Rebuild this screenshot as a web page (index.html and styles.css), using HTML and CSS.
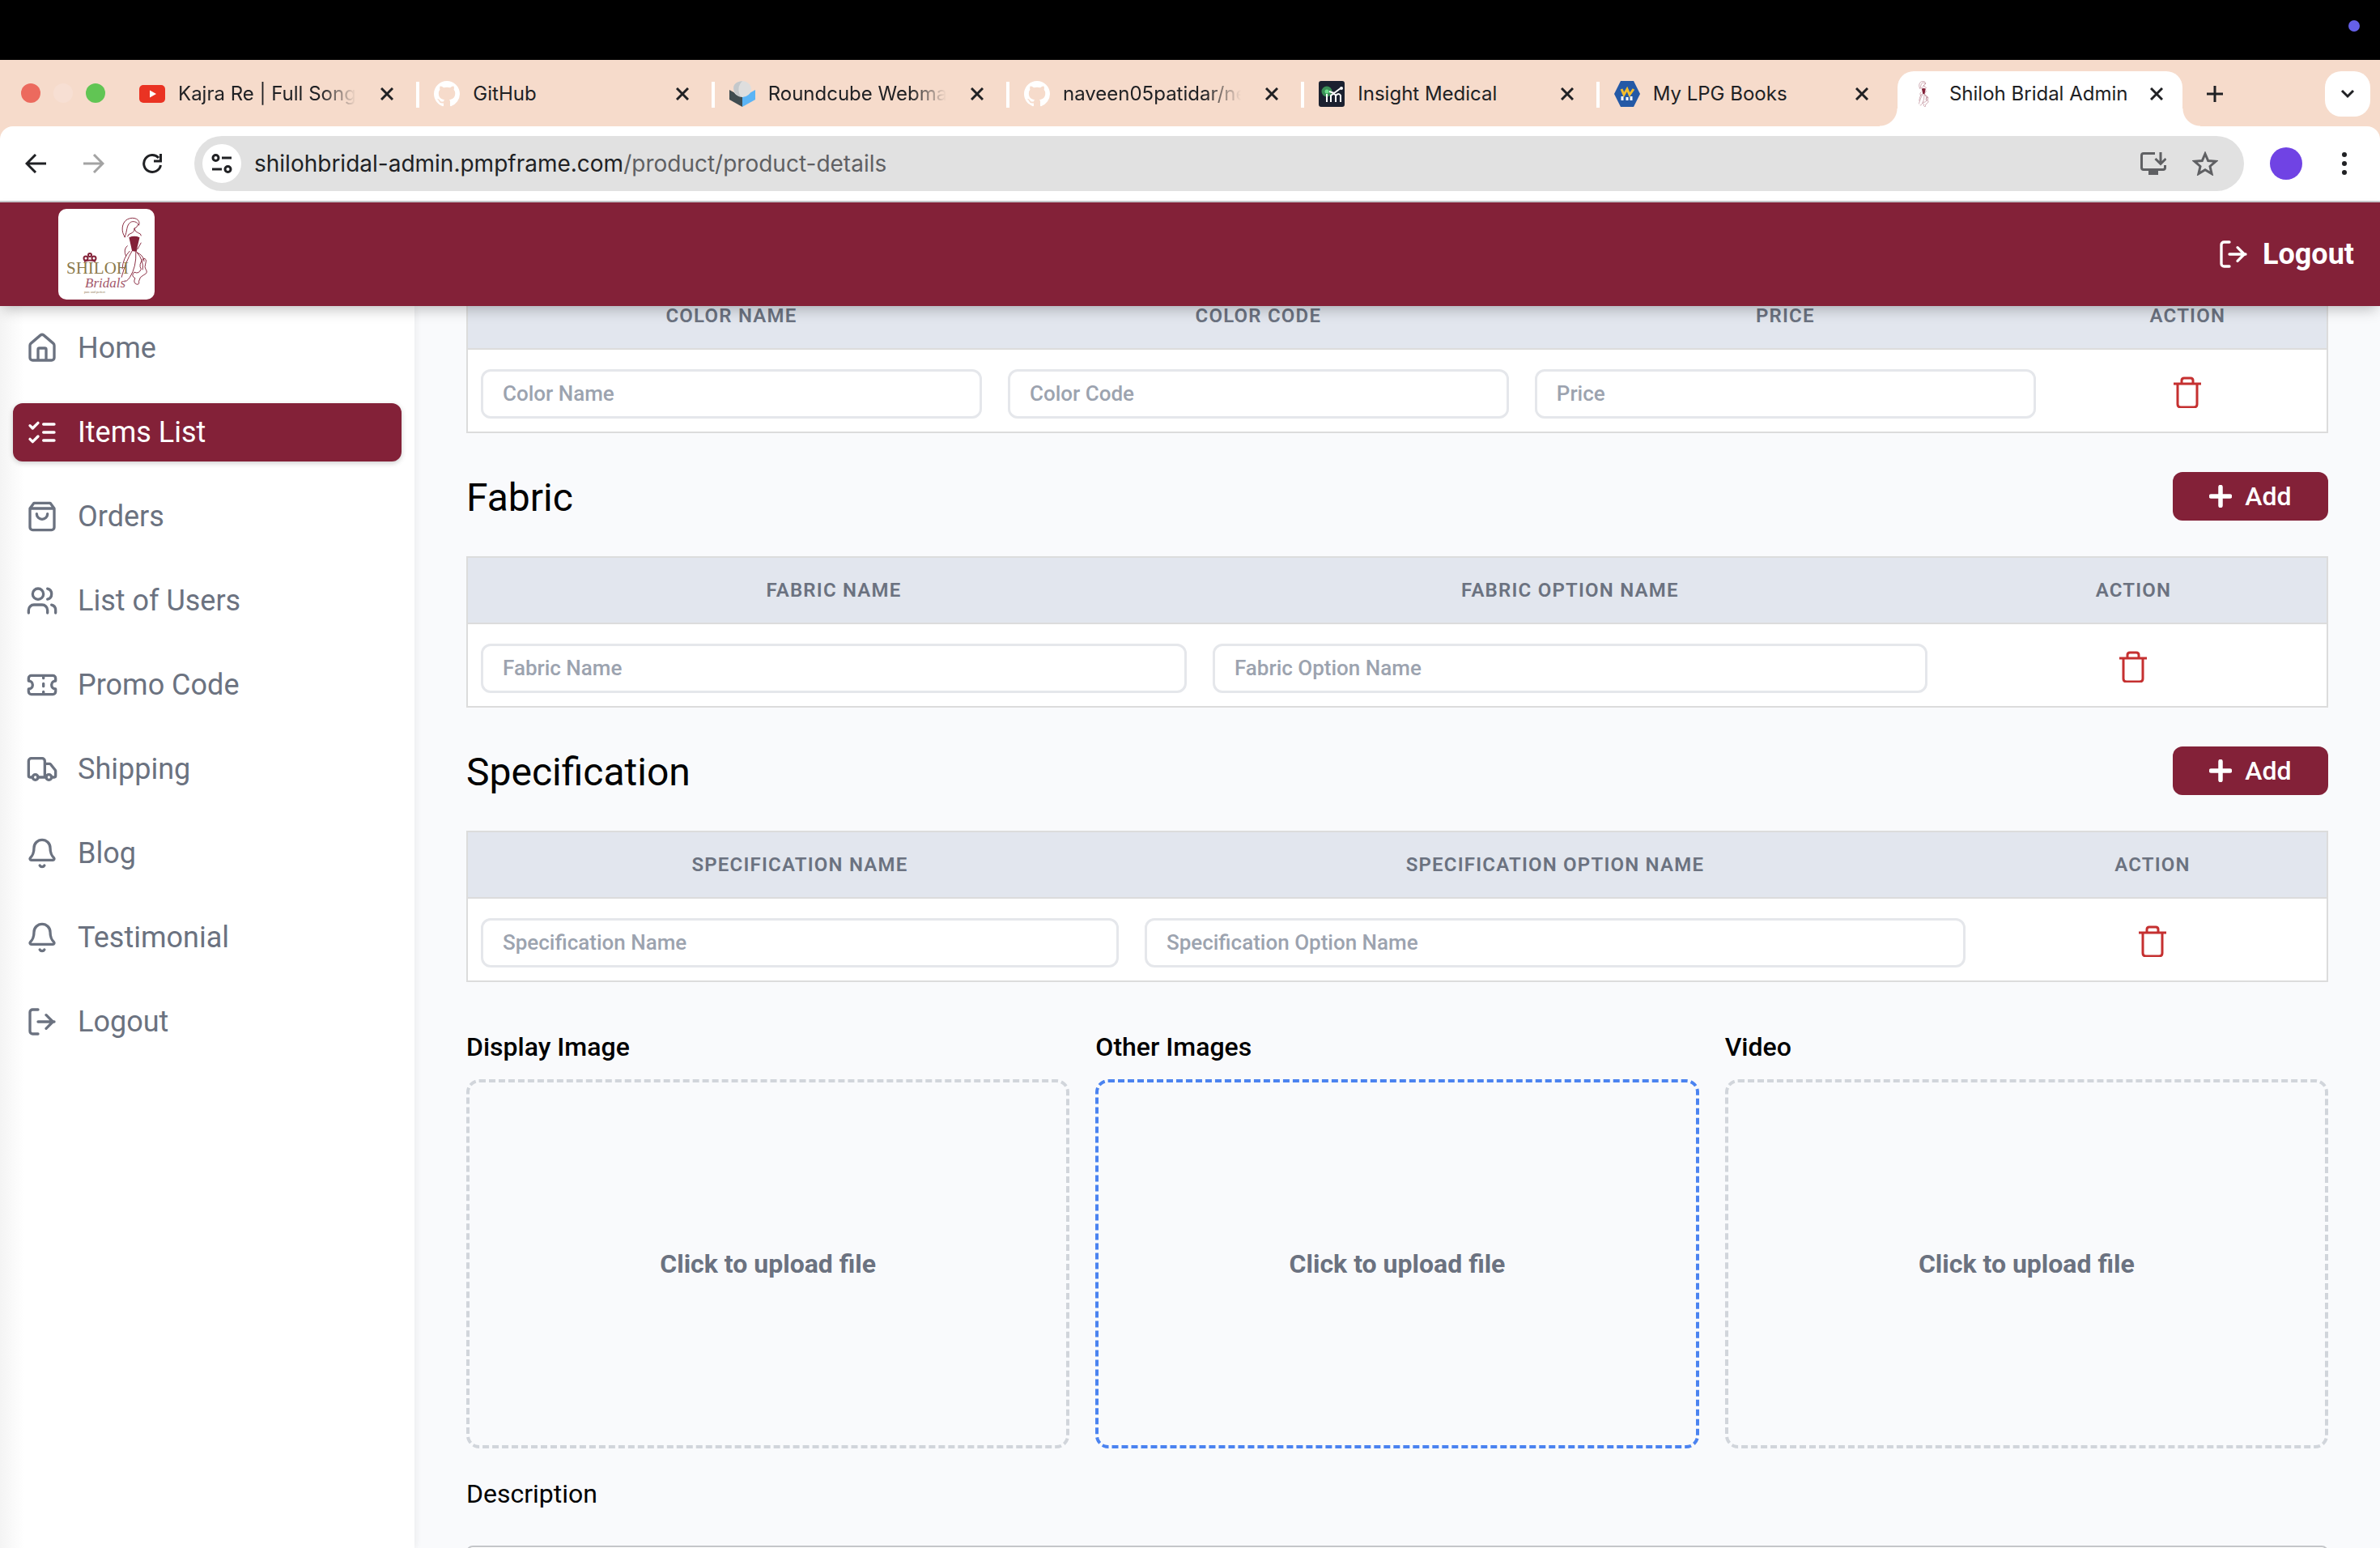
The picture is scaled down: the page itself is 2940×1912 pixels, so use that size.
FILE: index.html
```html
<!DOCTYPE html>
<html lang="en">
<head>
<meta charset="utf-8">
<title>Shiloh Bridal Admin</title>
<link rel="stylesheet" href="styles.css">
</head>
<body>
<svg class="defs" aria-hidden="true">
  <symbol id="close" viewBox="0 0 16 16"><path d="M1 1l14 14M15 1L1 15" stroke="currentColor" stroke-width="3"/></symbol>
  <symbol id="github" viewBox="0 0 16 16"><path fill="#fff" d="M8 0C3.58 0 0 3.58 0 8c0 3.54 2.29 6.53 5.47 7.59.4.07.55-.17.55-.38 0-.19-.01-.82-.01-1.49-2.01.37-2.53-.49-2.69-.94-.09-.23-.48-.94-.82-1.13-.28-.15-.68-.52-.01-.53.63-.01 1.08.58 1.23.82.72 1.21 1.87.87 2.33.66.07-.52.28-.87.51-1.07-1.78-.2-3.64-.89-3.64-3.95 0-.87.31-1.59.82-2.15-.08-.2-.36-1.02.08-2.12 0 0 .67-.21 2.2.82.64-.18 1.32-.27 2-.27s1.36.09 2 .27c1.53-1.04 2.2-.82 2.2-.82.44 1.1.16 1.92.08 2.12.51.56.82 1.27.82 2.15 0 3.07-1.87 3.75-3.65 3.95.29.25.54.73.54 1.48 0 1.07-.01 1.93-.01 2.2 0 .21.15.46.55.38A8.01 8.01 0 0 0 16 8c0-4.42-3.58-8-8-8z"/></symbol>
  <symbol id="logout" viewBox="0 0 24 24"><path d="M9 21H5a2 2 0 0 1-2-2V5a2 2 0 0 1 2-2h4M15 17l5-5-5-5M21 12H9"/></symbol>
  <symbol id="bell" viewBox="0 0 24 24"><path d="M10.300 21a1.940 1.940 0 0 0 3.400 0M3.262 15.326A1 1 0 0 0 4 17h16a1 1 0 0 0 .74-1.673C19.410 13.956 18 12.499 18 8A6 6 0 0 0 6 8c0 4.499-1.411 5.956-2.738 7.326"/></symbol>
  <symbol id="trash" viewBox="0 0 36 40"><path d="M1 10h34M11 9V6q0-3 3-3h8q3 0 3 3v3M6 10v25q0 4 4 4h16q4 0 4-4V10" fill="none" stroke="#c53030" stroke-width="3"/></symbol>
  <symbol id="plus" viewBox="0 0 28 28"><path d="M14 2.500v23M2.500 14h23" stroke="#fff" stroke-width="5.500" stroke-linecap="round"/></symbol>
  <symbol id="bride" viewBox="0 0 36 90"><g fill="none" stroke="#832138" stroke-width="1"><path d="M7 27C1 20 2 7 10 3c8-4 18 0 15 8-2-5-8-6-11-4-6 4-4 12-8 20M24 10q-2 5-5 5q1 4-3 6q-6 2-6 5M19 15q1 5 5 6t4 4M10 38Q4 43 8 52M28 34l-5 9M13 45Q4 54 3 69M16 45Q8 58 2 80M21 46q1 20-8 34-5 7-7 4M22 46q10 12 8 24M22 47q9 3 10 12M31 55q5 0 3 6t0 8q4 5-3 8-5 2-6 8 1 5-3 4-5-2-2-8-6-3-1-8 6 3 9-4-4-6 3-14"/></g><path d="M12 27q7-3 14 0l-3 13-1 6-6-1q-2-9-4-18z" fill="#832138"/></symbol>
</svg>

<div class="menubar"><span class="camera"></span></div>

<header class="browser">
  <div class="strip">
    <div class="lights"><i class="red"></i><i class="pale"></i><i class="green"></i></div>
    <div class="tabs">
      <div class="tab"><svg class="fav" viewBox="0 0 32 32"><rect y="5" width="32" height="22" rx="5" fill="#ea3323"/><path d="M13 11.500l8 4.500-8 4.500z" fill="#fff"/></svg><span class="title fade">Kajra Re | Full Song</span><button class="x" aria-label="Close tab"><svg><use href="#close"/></svg></button></div>
      <div class="tab"><svg class="fav"><use href="#github"/></svg><span class="title">GitHub</span><button class="x" aria-label="Close tab"><svg><use href="#close"/></svg></button></div>
      <div class="tab"><svg class="fav" viewBox="0 0 32 32"><path d="M0 11l16 9v12L0 23z" fill="#3f4c50"/><path d="M32 11l-16 9v12l16-9z" fill="#5bb4f5"/><ellipse cx="16" cy="10" rx="11" ry="10" fill="#dedede"/><path d="M16 0Q2 2 6 13q3 5 8 7Q8 8 16 0z" fill="#c4c8cb"/></svg><span class="title fade">Roundcube Webmail</span><button class="x" aria-label="Close tab"><svg><use href="#close"/></svg></button></div>
      <div class="tab"><svg class="fav"><use href="#github"/></svg><span class="title fade">naveen05patidar/new</span><button class="x" aria-label="Close tab"><svg><use href="#close"/></svg></button></div>
      <div class="tab"><svg class="fav" viewBox="0 0 32 32"><rect width="32" height="32" rx="3" fill="#1b2130"/><circle cx="10" cy="13" r="6.500" fill="#3a8f57"/><circle cx="10" cy="13" r="2.500" fill="#6be08c"/><path d="M10 16v10M15 26v-8q4-4 6 0v8M21 18q4-4 6 0v8M13 13l6 2 8-6" fill="none" stroke="#fff" stroke-width="2"/><circle cx="28" cy="9" r="2" fill="#fff"/></svg><span class="title">Insight Medical</span><button class="x" aria-label="Close tab"><svg><use href="#close"/></svg></button></div>
      <div class="tab last"><svg class="fav" viewBox="0 0 32 32"><path d="M8 0h16l8 16-8 16H8L0 16z" fill="#2459a6"/><path d="M9 10l3 7 4-7 3 7 5-7" fill="none" stroke="#f4bd2b" stroke-width="3"/><path d="M10 24v-5M16 24v-4M21 24v-5" stroke="#fff" stroke-width="3"/></svg><span class="title">My LPG Books</span><button class="x" aria-label="Close tab"><svg><use href="#close"/></svg></button></div>
      <div class="tab active"><svg class="fav"><use href="#bride"/></svg><span class="title">Shiloh Bridal Admin</span><button class="x" aria-label="Close tab"><svg><use href="#close"/></svg></button></div>
    </div>
    <div class="strip-end">
      <button class="plain" aria-label="New tab"><svg width="20" height="20" viewBox="0 0 20 20"><path d="M10 0v20M0 10h20" stroke="#202124" stroke-width="3"/></svg></button>
      <button class="chevron" aria-label="Search tabs"><svg width="18" height="12" viewBox="0 0 18 12"><path d="M2 2l7 7 7-7" fill="none" stroke="#202124" stroke-width="3"/></svg></button>
    </div>
  </div>
  <div class="toolbar">
    <nav class="history">
      <button class="plain" aria-label="Back"><svg width="26" height="24" viewBox="0 0 26 24"><path d="M26 12H3M13 1L2 12l11 11" fill="none" stroke="#202124" stroke-width="3"/></svg></button>
      <button class="plain" aria-label="Forward"><svg width="26" height="24" viewBox="0 0 26 24"><path d="M0 12h23M13 1l11 11-11 11" fill="none" stroke="#a3a3a3" stroke-width="3"/></svg></button>
      <button class="plain" aria-label="Reload"><svg width="26" height="26" viewBox="0 0 26 26"><path d="M21 6a10.500 10.500 0 1 0 2.500 9M23.500 1v9H15" fill="none" stroke="#202124" stroke-width="3"/></svg></button>
    </nav>
    <div class="omnibox">
      <span class="site"><svg width="26" height="24" viewBox="0 0 26 24"><g fill="none" stroke="#202124" stroke-width="3"><circle cx="5.500" cy="5" r="3.500"/><path d="M13 5h12M1 19h12"/><circle cx="20.500" cy="19" r="3.500"/></g></svg></span>
      <span class="url">shilohbridal-admin.pmpframe.com<span class="path">/product/product-details</span></span>
      <svg width="32" height="28" viewBox="0 0 32 28"><path d="M18 1.500H4q-2.500 0-2.500 2.500v15q0 2.500 2.500 2.500h24q2.500 0 2.500-2.500v-3M25 0v14M18.500 8l6.500 6.500L31.500 8" fill="none" stroke="#5f6063" stroke-width="3"/><path d="M2 20h28l-2 3h-6v5H10v-5H4z" fill="#5f6063"/></svg>
      <svg width="32" height="30" viewBox="0 0 32 30"><path d="M16 3l3.700 8.500 9.300.8-7 6.200 2.100 9.100L16 22.800l-8.100 4.800L10 18.500l-7-6.200 9.300-.8z" fill="none" stroke="#5f6063" stroke-width="3"/></svg>
    </div>
    <span class="avatar"></span>
    <button class="plain dots" aria-label="Menu"><svg width="8" height="30" viewBox="0 0 8 30"><g fill="#202124"><circle cx="4" cy="4" r="3"/><circle cx="4" cy="15" r="3"/><circle cx="4" cy="26" r="3"/></g></svg></button>
  </div>
</header>

<div class="app">
  <header class="topbar">
    <svg class="logo" viewBox="0 0 119 112" role="img" aria-label="Shiloh Bridals">
      <rect width="119" height="112" rx="10" fill="#fff"/>
      <svg x="75" y="10" width="36" height="84"><use href="#bride"/></svg>
      <g fill="none" stroke="#832138" stroke-width="2"><circle cx="39" cy="57" r="2"/><circle cx="34" cy="61" r="2.500"/><circle cx="44" cy="61" r="2.500"/><path d="M32 65q7-3 14 0"/></g>
      <text class="logo-name" x="10" y="80">SHILOH</text>
      <text class="logo-sub" x="33" y="97">Bridals</text>
      <text class="logo-tag" x="32" y="104">pure and perfect</text>
    </svg>
    <a class="signout" href="#"><svg class="icon"><use href="#logout"/></svg>Logout</a>
  </header>

  <div class="body">
    <nav class="sidebar">
      <a href="#"><svg class="icon" viewBox="0 0 24 24"><path d="M15 21v-8a1 1 0 0 0-1-1h-4a1 1 0 0 0-1 1v8M3 10a2 2 0 0 1 .709-1.528l7-5.999a2 2 0 0 1 2.582 0l7 5.999A2 2 0 0 1 21 10v9a2 2 0 0 1-2 2H5a2 2 0 0 1-2-2z"/></svg>Home</a>
      <a href="#" class="current"><svg class="icon" viewBox="0 0 24 24"><path d="M13 6h8M13 12h8M13 18h8M3 17l2 2 4-4M3 7l2 2 4-4"/></svg>Items List</a>
      <a href="#"><svg class="icon" viewBox="0 0 24 24"><path d="M6 2L3 6v14a2 2 0 0 0 2 2h14a2 2 0 0 0 2-2V6l-3-4zM3 6h18M16 10a4 4 0 0 1-8 0"/></svg>Orders</a>
      <a href="#"><svg class="icon" viewBox="0 0 24 24"><path d="M16 21v-2a4 4 0 0 0-4-4H6a4 4 0 0 0-4 4v2M22 21v-2a4 4 0 0 0-3-3.870M16 3.130a4 4 0 0 1 0 7.750"/><circle cx="9" cy="7" r="4"/></svg>List of Users</a>
      <a href="#"><svg class="icon" viewBox="0 0 24 24"><path d="M2 9a3 3 0 0 1 0 6v2a2 2 0 0 0 2 2h16a2 2 0 0 0 2-2v-2a3 3 0 0 1 0-6V7a2 2 0 0 0-2-2H4a2 2 0 0 0-2 2zM13 5v2M13 17v2M13 11v2"/></svg>Promo Code</a>
      <a href="#"><svg class="icon" viewBox="0 0 24 24"><path d="M14 18V6a2 2 0 0 0-2-2H4a2 2 0 0 0-2 2v11a1 1 0 0 0 1 1h2M15 18H9M19 18h2a1 1 0 0 0 1-1v-3.650a1 1 0 0 0-.22-.624l-3.480-4.350A1 1 0 0 0 17.520 8H14"/><circle cx="17" cy="18" r="2"/><circle cx="7" cy="18" r="2"/></svg>Shipping</a>
      <a href="#"><svg class="icon"><use href="#bell"/></svg>Blog</a>
      <a href="#"><svg class="icon"><use href="#bell"/></svg>Testimonial</a>
      <a href="#"><svg class="icon"><use href="#logout"/></svg>Logout</a>
    </nav>

    <main class="content">
      <table class="grid colors">
        <thead><tr><th class="c1">Color Name</th><th class="c2">Color Code</th><th class="c3">Price</th><th>Action</th></tr></thead>
        <tbody><tr>
          <td><input type="text" aria-label="Color Name" placeholder="Color Name"></td>
          <td><input type="text" aria-label="Color Code" placeholder="Color Code"></td>
          <td><input type="text" aria-label="Price" placeholder="Price"></td>
          <td><button class="plain" aria-label="Delete color"><svg width="36" height="40"><use href="#trash"/></svg></button></td>
        </tr></tbody>
      </table>

      <div class="heading"><h2>Fabric</h2><button class="add"><svg width="28" height="28"><use href="#plus"/></svg>Add</button></div>
      <table class="grid fabric">
        <thead><tr><th class="c1">Fabric Name</th><th class="c2">Fabric Option Name</th><th>Action</th></tr></thead>
        <tbody><tr>
          <td><input type="text" aria-label="Fabric Name" placeholder="Fabric Name"></td>
          <td><input type="text" aria-label="Fabric Option Name" placeholder="Fabric Option Name"></td>
          <td><button class="plain" aria-label="Delete fabric"><svg width="36" height="40"><use href="#trash"/></svg></button></td>
        </tr></tbody>
      </table>

      <div class="heading"><h2>Specification</h2><button class="add"><svg width="28" height="28"><use href="#plus"/></svg>Add</button></div>
      <table class="grid spec">
        <thead><tr><th class="c1">Specification Name</th><th class="c2">Specification Option Name</th><th>Action</th></tr></thead>
        <tbody><tr>
          <td><input type="text" aria-label="Specification Name" placeholder="Specification Name"></td>
          <td><input type="text" aria-label="Specification Option Name" placeholder="Specification Option Name"></td>
          <td><button class="plain" aria-label="Delete specification"><svg width="36" height="40"><use href="#trash"/></svg></button></td>
        </tr></tbody>
      </table>

      <div class="uploads">
        <div><label class="caption" for="display-image">Display Image</label><label class="drop"><input id="display-image" type="file">Click to upload file</label></div>
        <div><label class="caption" for="other-images">Other Images</label><label class="drop hover"><input id="other-images" type="file" multiple>Click to upload file</label></div>
        <div><label class="caption" for="video">Video</label><label class="drop"><input id="video" type="file">Click to upload file</label></div>
      </div>

      <label class="description" for="description">Description</label>
      <textarea id="description" class="editor"></textarea>
    </main>
  </div>
</div>
</body>
</html>
```
FILE: styles.css
```css
:root {
  --wine: #832138;
  --peach: #f6dbcb;
  --gray: #6b7280;
  --line: #dcdcdc;
}

* { box-sizing: border-box; }

body {
  margin: 0;
  height: 100vh;
  display: flex;
  flex-direction: column;
  overflow: hidden;
  background: #f9fafc;
  font-family: Roboto, sans-serif;
  color: #000;
}

button, input, textarea { font: inherit; margin: 0; }
a { color: inherit; text-decoration: none; }
svg { flex: none; display: block; }
.defs { position: absolute; width: 0; height: 0; }

.plain {
  border: 0;
  padding: 0;
  background: none;
  display: flex;
  align-items: center;
  justify-content: center;
}

/* System menu bar */
.menubar {
  flex: none;
  height: 74px;
  padding: 25px;
  background: #000;
  display: flex;
  justify-content: flex-end;
}
.camera { width: 14px; height: 14px; border-radius: 50%; background: #6560e8; }

/* Browser chrome */
.browser {
  flex: none;
  background: var(--peach);
  font-family: Inter, sans-serif;
  color: #202124;
}
.strip { display: flex; height: 82px; }
.lights { flex: none; width: 152px; padding: 29px 0 0 26px; display: flex; gap: 16px; }
.lights i { width: 24px; height: 24px; border-radius: 50%; }
.red { background: #ec6a5e; }
.pale { background: #f7dfd3; }
.green { background: #61c554; }

.tabs { flex: 1; display: flex; min-width: 0; }
.tab {
  flex: 1 1 0;
  min-width: 0;
  height: 82px;
  padding: 2px 30px 0 20px;
  display: flex;
  align-items: center;
  position: relative;
}
.tab:not(.last):not(.active)::after {
  content: "";
  position: absolute;
  right: -2px;
  top: 27px;
  width: 4px;
  height: 32px;
  background: #fff;
}
.fav { width: 32px; height: 32px; margin-right: 16px; }
.title { flex: 1; min-width: 0; font-size: 24px; line-height: 32px; white-space: nowrap; overflow: hidden; margin-right: 30px; }
.tab.active .title { margin-right: 20px; overflow: visible; }
.fade { -webkit-mask-image: linear-gradient(90deg, #000 80%, transparent); mask-image: linear-gradient(90deg, #000 80%, transparent); }
.x { border: 0; padding: 0; background: none; color: inherit; }
.x svg { width: 16px; height: 16px; }
.tab.active {
  flex: 0 0 352px;
  margin: 14px 6px 0 6px;
  height: 68px;
  padding: 0 24px 12px 16px;
  background: #fff;
  border-radius: 20px 20px 0 0;
}
.tab.active::before, .tab.active::after {
  content: "";
  position: absolute;
  bottom: 0;
  width: 22px;
  height: 22px;
}
.tab.active::before { left: -22px; background: radial-gradient(circle at 0 0, transparent 21px, #fff 22px); }
.tab.active::after { right: -22px; background: radial-gradient(circle at 100% 0, transparent 21px, #fff 22px); }
.strip-end {
  flex: none;
  width: 238px;
  padding: 14px 12px 12px 24px;
  display: flex;
  justify-content: space-between;
}
.chevron {
  width: 56px;
  height: 56px;
  border: 0;
  border-radius: 20px;
  background: #fff;
  display: flex;
  align-items: center;
  justify-content: center;
}

.toolbar {
  height: 94px;
  padding: 0 40px 0 31px;
  display: flex;
  align-items: center;
  background: #fff;
  border-bottom: 2px solid #c9c9cc;
  border-radius: 16px 16px 0 0;
}
.history { display: flex; gap: 46px; width: 209px; }
.omnibox {
  flex: 1;
  height: 68px;
  padding: 0 32px 0 10px;
  border-radius: 34px;
  background: #e1e1e1;
  display: flex;
  align-items: center;
  gap: 32px;
}
.site {
  width: 48px;
  height: 48px;
  border-radius: 50%;
  background: #fff;
  display: flex;
  align-items: center;
  justify-content: center;
}
.url { flex: 1; margin-left: -16px; font-size: 28px; line-height: 40px; }
.path { color: #5f6063; }
.avatar { width: 40px; height: 40px; margin: 0 48px 0 32px; border-radius: 50%; background: #7043e4; }

/* Application */
.app { flex: 1; min-height: 0; display: flex; flex-direction: column; }
.topbar {
  flex: none;
  height: 128px;
  padding: 0 32px 0 72px;
  display: flex;
  align-items: center;
  justify-content: space-between;
  background: var(--wine);
  box-shadow: 0 8px 16px -4px rgba(0, 0, 0, .25);
  position: relative;
  z-index: 1;
}
.logo { width: 119px; height: 112px; }
.logo-name { font: 21px "Liberation Serif", serif; fill: #8b7a4b; }
.logo-sub { font: italic 17px "Liberation Serif", serif; fill: #a4586b; }
.logo-tag { font: 4px "Liberation Serif", serif; fill: #8b7a4b; }
.icon {
  width: 40px;
  height: 40px;
  fill: none;
  stroke: currentColor;
  stroke-width: 2;
  stroke-linecap: round;
  stroke-linejoin: round;
}
.signout {
  display: flex;
  align-items: center;
  gap: 16px;
  color: #fff;
  font-size: 36px;
  font-weight: 700;
}

.body { flex: 1; min-height: 0; display: flex; }
.sidebar {
  flex: none;
  width: 512px;
  padding: 16px;
  display: flex;
  flex-direction: column;
  gap: 32px;
  background: linear-gradient(90deg, #f4f4f4, #fff 30px);
  box-shadow: 2px 0 8px rgba(0, 0, 0, .06);
}
.sidebar a {
  flex: none;
  height: 72px;
  padding: 0 16px;
  display: flex;
  align-items: center;
  gap: 24px;
  border-radius: 12px;
  color: var(--gray);
  font-size: 36px;
}
.sidebar .current { background: var(--wine); color: #fff; box-shadow: 0 2px 6px rgba(0, 0, 0, .2); }

.content { flex: 1; min-width: 0; padding: 0 64px; overflow: hidden; }

/* Option tables */
.grid {
  width: 100%;
  table-layout: fixed;
  border: 2px solid var(--line);
  border-spacing: 0;
  background: #fff;
}
.grid th {
  height: 82px;
  padding: 0 16px;
  background: #e2e6ee;
  border-bottom: 2px solid var(--line);
  color: var(--gray);
  font-size: 24px;
  font-weight: 600;
  letter-spacing: .05em;
  text-transform: uppercase;
}
.grid td { height: 101px; padding: 24px 16px 16px; vertical-align: top; }
.grid td .plain { margin: 8px auto 0; }
.grid input {
  display: block;
  width: 100%;
  height: 61px;
  padding: 0 24px 2px;
  border: 3px solid #e5e7eb;
  border-radius: 12px;
  background: #fff;
  font-size: 26px;
}
.grid input::placeholder { color: #9ca3af; opacity: 1; font-weight: 500; }

.colors { margin-top: -30px; }
.colors .c1, .colors .c2, .colors .c3 { width: 28.35%; }
.fabric .c1 { width: 39.37%; }
.fabric .c2 { width: 39.85%; }
.spec .c1 { width: 35.71%; }
.spec .c2 { width: 45.56%; }

.heading {
  margin: 48px 0 44px;
  height: 60px;
  display: flex;
  align-items: center;
  justify-content: space-between;
}
.heading h2 { margin: 0; padding-top: 2px; font-size: 48px; font-weight: 400; }
.add {
  width: 192px;
  height: 60px;
  padding: 0;
  border: 0;
  border-radius: 12px;
  background: var(--wine);
  color: #fff;
  font-size: 32px;
  font-weight: 500;
  display: flex;
  align-items: center;
  justify-content: center;
  gap: 16px;
}

/* Uploads */
.uploads {
  margin-top: 56px;
  display: grid;
  grid-template-columns: repeat(3, 1fr);
  gap: 32px;
}
.caption { display: block; font-size: 32px; line-height: 48px; font-weight: 500; }
.drop {
  margin-top: 16px;
  height: 456px;
  border: 4px dashed #d1d5db;
  border-radius: 16px;
  display: flex;
  align-items: center;
  justify-content: center;
  color: var(--gray);
  font-size: 32px;
  font-weight: 700;
}
.drop.hover { border-color: #4b83f0; }
.drop input { position: absolute; width: 1px; height: 1px; opacity: 0; }

.description { display: block; margin: 32px 0 40px; font-size: 32px; line-height: 48px; }
.editor {
  display: block;
  width: 100%;
  height: 300px;
  border: 2px solid #c4c6c9;
  border-radius: 8px;
  background: #fff;
}
```
